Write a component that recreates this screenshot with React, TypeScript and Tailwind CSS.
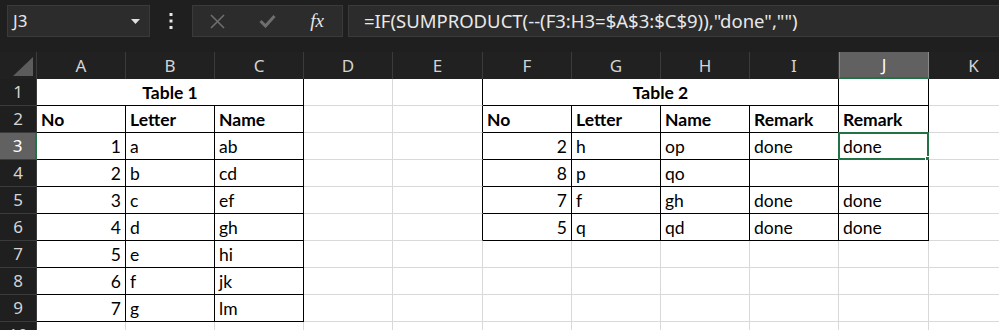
import React from 'react';

const COLS = ['A', 'B', 'C', 'D', 'E', 'F', 'G', 'H', 'I', 'J', 'K'];

type Cell = { v?: string; right?: boolean; bold?: boolean };

// sheet content, keyed by "row-colIndex"
const data: Record<string, Cell> = {};
const t1 = [
  [1, 'a', 'ab'],
  [2, 'b', 'cd'],
  [3, 'c', 'ef'],
  [4, 'd', 'gh'],
  [5, 'e', 'hi'],
  [6, 'f', 'jk'],
  [7, 'g', 'lm'],
];
['No', 'Letter', 'Name'].forEach((h, i) => (data[`2-${i}`] = { v: h, bold: true }));
t1.forEach((r, ri) => {
  data[`${ri + 3}-0`] = { v: String(r[0]), right: true };
  data[`${ri + 3}-1`] = { v: String(r[1]) };
  data[`${ri + 3}-2`] = { v: String(r[2]) };
});
const t2 = [
  [2, 'h', 'op', 'done', 'done'],
  [8, 'p', 'qo', '', ''],
  [7, 'f', 'gh', 'done', 'done'],
  [5, 'q', 'qd', 'done', 'done'],
];
['No', 'Letter', 'Name', 'Remark', 'Remark'].forEach((h, i) => (data[`2-${i + 5}`] = { v: h, bold: true }));
t2.forEach((r, ri) => {
  r.forEach((v, ci) => (data[`${ri + 3}-${ci + 5}`] = { v: String(v), right: ci === 0 }));
});

const inT1 = (r: number, c: number) => r >= 1 && r <= 9 && c <= 2;
const inT2 = (r: number, c: number) => r >= 1 && r <= 6 && c >= 5 && c <= 9;

function GridCell({ r, c }: { r: number; c: number }) {
  const cell = data[`${r}-${c}`] || {};
  const inside = inT1(r, c) || inT2(r, c);
  const darkRight = inside || (c === 4 && r >= 1 && r <= 6);
  const darkBottom = inside;
  const selected = r === 3 && c === 9;
  return (
    <div
      className={`relative flex items-end px-[4px] pb-[1px] border-r border-b text-[17.5px] leading-[22px] text-black bg-white whitespace-nowrap ${
        darkRight ? 'border-r-black' : 'border-r-[#d9d9d9]'
      } ${darkBottom ? 'border-b-black' : 'border-b-[#d9d9d9]'} ${cell.right ? 'justify-end' : 'justify-start'} ${
        cell.bold ? 'font-bold' : 'font-normal'
      }`}
    >
      {cell.v}
      {selected && (
        <>
          <div className="absolute -left-[1px] -top-[1px] -right-[1px] -bottom-[1px] border-2 border-[#217346]" />
          <div className="absolute -right-[4px] -bottom-[4px] w-[7px] h-[7px] bg-[#217346] border border-white" />
        </>
      )}
    </div>
  );
}

function MergedTitle({ text, span }: { text: string; span: 'col-span-3' | 'col-span-4' }) {
  return (
    <div
      className={`${span} flex items-end justify-center pb-[1px] bg-white border-r border-b border-r-black border-b-black font-bold text-[17.5px] leading-[22px] text-black`}
    >
      {text}
    </div>
  );
}

function RowHeader({ n }: { n: number }) {
  const sel = n === 3;
  return (
    <div
      className={`flex items-center justify-center border-b border-[#3b3b3b] text-[17px] ${
        sel ? 'bg-[#616161] text-white border-r-2 border-r-[#217346]' : 'bg-[#1f1f1f] text-[#d4d4d4] border-r border-r-[#3b3b3b]'
      }`}
      style={{ fontFamily: '"Noto Sans", sans-serif' }}
    >
      {n}
    </div>
  );
}

function ColHeader({ l }: { l: string }) {
  const sel = l === 'J';
  return (
    <div
      className={`flex items-center justify-center text-[17px] ${
        sel
          ? 'bg-[#616161] text-white border-x border-[#8a8a8a] border-b-2 border-b-[#217346]'
          : 'bg-[#212121] text-[#d4d4d4] border-r border-[#3b3b3b]'
      }`}
      style={{ fontFamily: '"Noto Sans", sans-serif' }}
    >
      {l}
    </div>
  );
}

function FormulaBar() {
  return (
    <div className="h-[52px] flex items-start pt-[5px] bg-[#1f1f1f]" style={{ fontFamily: '"Noto Sans", sans-serif' }}>
      <div className="ml-[7px] w-[143px] h-[32px] bg-[#2c2c2c] border border-[#3a3a3a] flex items-center justify-between pl-[5px] pr-[9px] text-[17px] text-[#e8e8e8]">
        <span>J3</span>
        <svg width="9" height="5" viewBox="0 0 9 5">
          <polygon points="0,0 9,0 4.5,5" fill="#e0e0e0" />
        </svg>
      </div>
      <div className="w-[42px] h-[32px] flex items-center justify-center">
        <svg width="4" height="16" viewBox="0 0 4 16">
          <rect x="0.5" y="0" width="3" height="3" fill="#e6e6e6" />
          <rect x="0.5" y="6.5" width="3" height="3" fill="#e6e6e6" />
          <rect x="0.5" y="13" width="3" height="3" fill="#e6e6e6" />
        </svg>
      </div>
      <div className="w-[151px] h-[32px] bg-[#2c2c2c] border border-[#3a3a3a] flex items-center">
        <div className="w-[50px] flex justify-center">
          <svg width="15" height="15" viewBox="0 0 15 15">
            <path d="M1 1 L14 14 M14 1 L1 14" stroke="#6e6e6e" strokeWidth="1.6" />
          </svg>
        </div>
        <div className="w-[50px] flex justify-center">
          <svg width="17" height="14" viewBox="0 0 17 14">
            <path d="M1.5 7 L6.5 12 L15.5 2" stroke="#6e6e6e" strokeWidth="3" fill="none" />
          </svg>
        </div>
        <div
          className="w-[50px] flex justify-center italic text-[19px] text-[#e6e6e6]"
          style={{ fontFamily: '"Liberation Serif", serif' }}
        >
          fx
        </div>
      </div>
      <div className="ml-[5px] flex-1 h-[32px] bg-[#2c2c2c] border border-r-0 border-[#3a3a3a] flex items-center pl-[15px] text-[18.5px] text-[#e8e8e8] whitespace-nowrap">
        =IF(SUMPRODUCT(--(F3:H3=$A$3:$C$9)),"done","")
      </div>
    </div>
  );
}

export default function App() {
  const rows = Array.from({ length: 10 }, (_, i) => i + 1);
  return (
    <div className="w-[999px] h-[330px] overflow-hidden bg-[#1f1f1f]">
      <FormulaBar />
      <div
        className="grid grid-cols-[37px_89px_89px_89px_89px_90px_89px_89px_89px_89px_90px_90px] auto-rows-[27px]"
        style={{ fontFamily: 'Lato, "Liberation Sans", sans-serif' }}
      >
        {/* corner */}
        <div className="relative bg-[#212121] border-r border-[#3b3b3b]">
          <svg className="absolute right-[3px] bottom-[3px]" width="20" height="19" viewBox="0 0 20 19">
            <polygon points="20,0 20,19 0,19" fill="#5c5c5c" />
          </svg>
        </div>
        {COLS.map((l) => (
          <ColHeader key={l} l={l} />
        ))}
        {rows.map((r) => (
          <React.Fragment key={r}>
            <RowHeader n={r} />
            {r === 1 ? (
              <>
                <MergedTitle text="Table 1" span="col-span-3" />
                <GridCell r={1} c={3} />
                <GridCell r={1} c={4} />
                <MergedTitle text="Table 2" span="col-span-4" />
                <GridCell r={1} c={9} />
                <GridCell r={1} c={10} />
              </>
            ) : (
              COLS.map((_, c) => <GridCell key={c} r={r} c={c} />)
            )}
          </React.Fragment>
        ))}
      </div>
    </div>
  );
}
